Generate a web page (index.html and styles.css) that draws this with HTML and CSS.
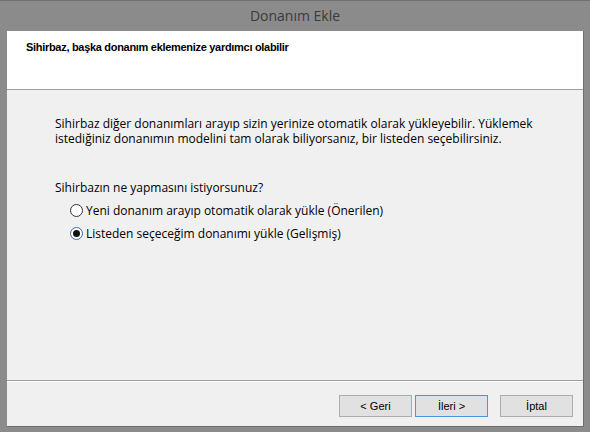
FILE: index.html
```html
<!DOCTYPE html>
<html lang="tr">
<head>
    <meta charset="UTF-8">
    <title>Donanım Ekle</title>
    <link rel="stylesheet" href="styles.css">
</head>
<body>
    <div class="window">
        <div class="titlebar">Donanım Ekle</div>
        <div class="client">
            <div class="header">
                <h1>Sihirbaz, başka donanım eklemenize yardımcı olabilir</h1>
            </div>
            <div class="content">
                <p class="intro">Sihirbaz diğer donanımları arayıp sizin yerinize otomatik olarak yükleyebilir. Yüklemek istediğiniz donanımın modelini tam olarak biliyorsanız, bir listeden seçebilirsiniz.</p>
                <p class="question">Sihirbazın ne yapmasını istiyorsunuz?</p>
                <div class="options">
                    <label class="option"><span class="radio"></span>Yeni donanım arayıp otomatik olarak yükle (Önerilen)</label>
                    <label class="option"><span class="radio checked"></span>Listeden seçeceğim donanımı yükle (Gelişmiş)</label>
                </div>
            </div>
            <div class="footer">
                <div class="btn">&lt; Geri</div>
                <div class="btn default">İleri &gt;</div>
                <div class="btn cancel">İptal</div>
            </div>
        </div>
    </div>
</body>
</html>
```

FILE: styles.css
```css
*{
    margin: 0;
    padding: 0;
    box-sizing: border-box;
}
body{
    background: #8b8b8b;
    font-family: "Open Sans", "Noto Sans", sans-serif;
}
.window{
    width: 590px;
    height: 432px;
    display: flex;
    flex-direction: column;
    border-top: 1px solid #6f6f6f;
}
.titlebar{
    height: 30px;
    line-height: 29px;
    text-align: center;
    font-size: 14px;
    color: #3b3b3b;
}
.client{
    margin: 0 6px 0 7px;
    height: 396px;
    background: #f0f0f0;
    border-right: 1px solid #6e6e6e;
    border-bottom: 1px solid #6e6e6e;
    display: flex;
    flex-direction: column;
}
.header{
    height: 59px;
    background: #fff;
    border-bottom: 1px solid #a0a0a0;
    padding: 10px 0 0 19px;
}
.header h1{
    font-family: "Liberation Sans", Arial, sans-serif;
    font-size: 11px;
    font-weight: bold;
    letter-spacing: -0.3px;
    color: #000;
}
.content{
    height: 291px;
    border-bottom: 1px solid #a0a0a0;
    box-shadow: 0 1px 0 #fff;
    padding: 26px 20px 0 48px;
    font-size: 12px;
    color: #000;
}
.intro{
    line-height: 15px;
}
.question{
    margin-top: 34px;
    line-height: 15px;
}
.options{
    margin: 8px 0 0 15px;
    display: flex;
    flex-direction: column;
    gap: 8px;
}
.option{
    display: flex;
    align-items: center;
    line-height: 15px;
}
.radio{
    width: 13px;
    height: 13px;
    border: 1px solid #333;
    border-radius: 50%;
    background: #fff;
    margin-right: 3px;
    display: flex;
    align-items: center;
    justify-content: center;
}
.radio.checked{
    border-color: #3c6fa8;
}
.radio.checked::after{
    content: '';
    width: 7px;
    height: 7px;
    border-radius: 50%;
    background: #111;
}
.footer{
    flex: 1;
    display: flex;
    justify-content: flex-end;
    align-items: flex-start;
    padding: 14px 10px 0 0;
}
.btn{
    width: 73px;
    height: 22px;
    border: 1px solid #adadad;
    background: #e1e1e1;
    font-family: "Liberation Sans", Arial, sans-serif;
    font-size: 11px;
    line-height: 20px;
    text-align: center;
    color: #000;
    margin-left: 3px;
}
.btn.default{
    border-color: #4c95d8;
}
.btn.cancel{
    margin-left: 12px;
}
```
